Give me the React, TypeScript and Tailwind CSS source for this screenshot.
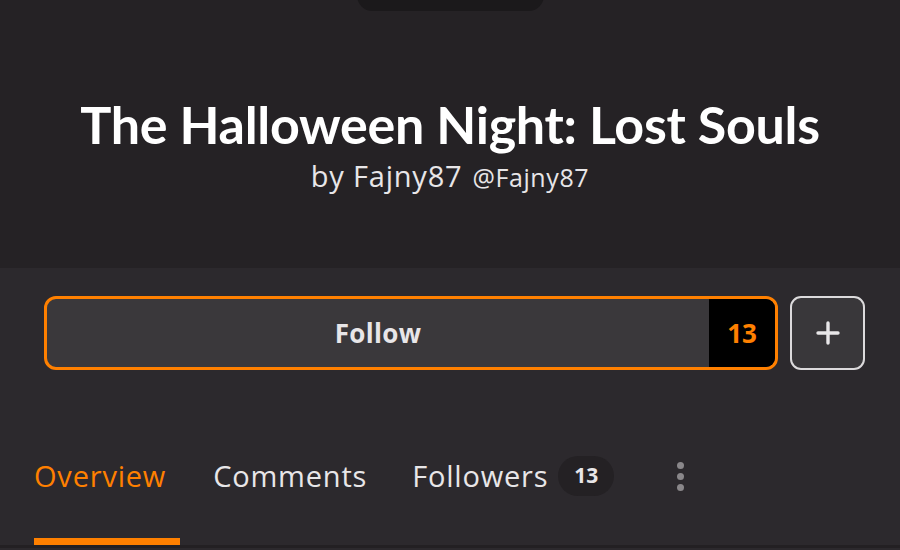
import React from "react";

export default function App() {
  const os = { fontFamily: "'Open Sans', 'Noto Sans', sans-serif" };
  return (
    <div className="w-[900px] h-[550px] overflow-hidden bg-[#2c292d] flex flex-col" style={{ fontFamily: "Lato, 'Noto Sans', sans-serif" }}>
      <div className="h-[268px] bg-[#252225] flex flex-col items-center relative">
        <div className="absolute top-[-20px] left-[357px] w-[187px] h-[31px] rounded-b-[20px] rounded-t-[20px] bg-[#1b191b]" />
        <h1 className="mt-[92px] text-[52px] leading-[64px] font-bold text-white tracking-[-0.3px]">The Halloween Night: Lost Souls</h1>
        <div className="mt-[-2px] text-[#e8e6e8] flex items-baseline gap-[10px]" style={os}>
          <span className="text-[29px] tracking-[0.8px]">by Fajny87</span>
          <span className="text-[25px] tracking-[0.6px]">@Fajny87</span>
        </div>
      </div>
      <div className="flex pl-[44px] pr-[35px] pt-[28px] gap-[12px]">
        <div className="flex-1 h-[74px] border-[3px] border-[#ff8000] rounded-[12px] bg-[#3a383b] flex overflow-hidden">
          <div className="flex-1 flex items-center justify-center text-[26px] font-bold text-[#e8e6e8] tracking-[0.3px]" style={os}>Follow</div>
          <div className="w-[66px] bg-black flex items-center justify-center text-[26px] font-bold text-[#ff8000]" style={os}>13</div>
        </div>
        <div className="w-[75px] h-[74px] border-[2px] border-[#dcdadc] rounded-[11px] bg-[#39373a] flex items-center justify-center">
          <svg width="26" height="26" viewBox="0 0 26 26"><path d="M13 3v20M3 13h20" stroke="#e8e6e8" strokeWidth="3.4" strokeLinecap="round" /></svg>
        </div>
      </div>
      <div className="flex items-center mt-[86px] h-[40px] px-[34px] text-[29px] tracking-[0.8px] text-[#e8e6e8]" style={os}>
        <div className="text-[#ff8000]">Overview</div>
        <div className="ml-[47px]">Comments</div>
        <div className="ml-[45px]">Followers</div>
        <div className="ml-[10px] w-[56px] h-[40px] rounded-full bg-[#242124] flex items-center justify-center text-[21px] font-bold tracking-normal text-[#e8e6e8]">13</div>
        <div className="ml-[63px] flex flex-col gap-[4px]">
          <div className="w-[7px] h-[7px] rounded-full bg-[#8a878a]" />
          <div className="w-[7px] h-[7px] rounded-full bg-[#8a878a]" />
          <div className="w-[7px] h-[7px] rounded-full bg-[#8a878a]" />
        </div>
      </div>
      <div className="mt-[42px] ml-[34px] w-[146px] h-[7px] bg-[#ff8000]" />
      <div className="h-[3px] bg-[#232023]" />
    </div>
  );
}
